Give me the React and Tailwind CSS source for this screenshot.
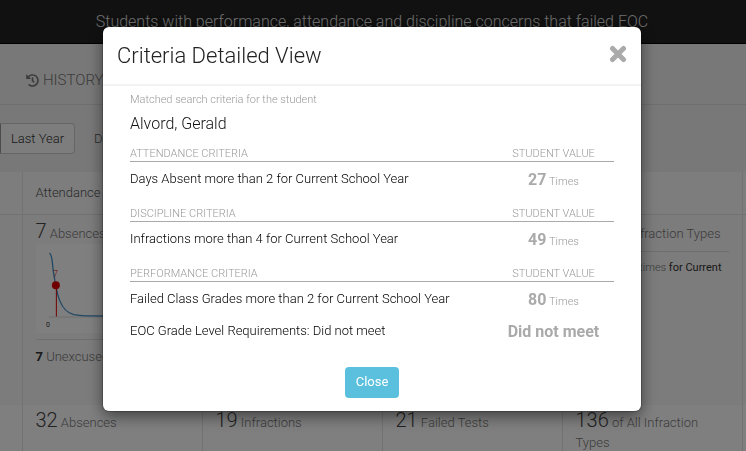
import { FaHistory } from "react-icons/fa";

const sections = [
  {
    title: "ATTENDANCE CRITERIA",
    rows: [{ label: "Days Absent more than 2 for Current School Year", value: "27", unit: "Times" }],
  },
  {
    title: "DISCIPLINE CRITERIA",
    rows: [{ label: "Infractions more than 4 for Current School Year", value: "49", unit: "Times" }],
  },
  {
    title: "PERFORMANCE CRITERIA",
    rows: [
      { label: "Failed Class Grades more than 2 for Current School Year", value: "80", unit: "Times" },
      { label: "EOC Grade Level Requirements: Did not meet", value: "Did not meet" },
    ],
  },
];

function CriteriaTable({ title, rows }) {
  return (
    <table className="w-full table-fixed border-collapse">
      <thead>
        <tr className="h-[15px] border-b border-[#aaa] text-[11px] leading-[13px] text-[#999]">
          <th scope="col" className="px-0 pt-px pb-0 text-left font-light">{title}</th>
          <th scope="col" className="w-[121px] px-0 pt-px pb-0 text-center font-light">STUDENT VALUE</th>
        </tr>
      </thead>
      <tbody>
        {rows.map((row) => (
          <tr key={row.label} className="h-8">
            <td className="px-0 pt-1 pb-0 text-[13px] leading-5 text-black">{row.label}</td>
            <td className="px-0 pt-2 pb-0 text-center text-[11px] leading-5 whitespace-nowrap text-[#999]">
              <strong className="text-base leading-5 font-bold text-[#aaa]">{row.value}</strong>
              {row.unit && <span> {row.unit}</span>}
            </td>
          </tr>
        ))}
      </tbody>
    </table>
  );
}

function Count({ number, children }) {
  return (
    <p className="text-[13px] leading-5 text-[#777]">
      <span className="text-[20px] text-[#444]">{number}</span> {children}
    </p>
  );
}

function AbsenceChart() {
  return (
    <svg viewBox="0 0 154 89" preserveAspectRatio="xMinYMin meet" className="h-[89px] w-full bg-[#ffffff]" role="img" aria-label="Absences distribution">
      <path d="M13 73.500H154" stroke="#ddd" />
      <path d="M13.500 9C17 11 16 21 18 31C21 50 24 68 38 71C50 73 60 72.500 154 72.500" fill="none" stroke="#3e8fc8" strokeWidth="1.300" />
      <path d="M20.500 41V73" stroke="#e00000" />
      <circle cx="20" cy="41.500" r="4" fill="#e00000" />
      <text x="17" y="33" fontSize="9" fill="#e00000">7</text>
      <text x="10" y="84" fontSize="7" className="font-normal" fill="#333">0</text>
    </svg>
  );
}

function Dashboard() {
  return (
    <div className="min-h-screen bg-[#f0f0f0]" aria-hidden="true">
      <header className="h-11 border-b border-black bg-[#222] pr-[2px] text-center text-base leading-[43px] text-[#ddd]">
        Students with performance, attendance and discipline concerns that failed EOC
      </header>
      <nav className="flex h-[61px] items-center border-b border-[#ddd] px-[26px] pt-[13px]">
        <a href="#history" className="flex items-center gap-1 text-[15px] text-[#777]">
          <FaHistory className="size-[13px]" />
          HISTORY
        </a>
      </nav>
      <div className="flex h-[67px] items-center">
        <button type="button" className="h-[31px] w-[75px] rounded-r border border-[#ccc] border-l-[#999] bg-[#fafafa] text-[13px] text-[#333]">
          Last Year
        </button>
        <button type="button" className="ml-[19px] text-[13px] text-[#555]">District</button>
      </div>
      <table className="w-full table-fixed border-collapse text-left text-[13px]">
        <colgroup>
          <col className="w-[22px]" />
          <col /><col /><col /><col />
          <col className="w-1" />
        </colgroup>
        <thead>
          <tr className="h-[42px] border-b border-[#e2e2e2] bg-[#fafafa] text-[#555]">
            <td />
            <th className="border-l border-[#e5e5e5] px-[13px] font-light">Attendance</th>
            <th className="border-l border-[#e5e5e5] px-[13px] font-light">Discipline</th>
            <th className="border-l border-[#e5e5e5] px-[13px] font-light">Performance</th>
            <th className="border-x border-[#e5e5e5] px-[13px] font-light">Infractions</th>
            <td />
          </tr>
        </thead>
        <tbody className="align-top">
          <tr className="h-[191px] bg-[#f8f8f8]">
            <td />
            <td className="border-l border-[#e5e5e5] px-[13px] pt-[6px]">
              <Count number="7">Absences</Count>
              <div className="border-b border-[#ddd] pb-[6px]"><AbsenceChart /></div>
              <p className="pt-[7px] leading-5 text-[#777]"><strong className="font-bold text-[#333]">7</strong> Unexcused</p>
            </td>
            <td className="border-l border-[#e5e5e5]" />
            <td className="border-l border-[#e5e5e5]" />
            <td className="border-x border-[#e5e5e5] px-[13px] pt-[9px]">
              <p className="border-b border-[#ddd] pr-2 pb-[7px] text-right leading-5 text-[#777]">80 Infraction Types</p>
              <p className="pt-[6px] pr-[7px] text-right text-[11px] leading-5 whitespace-nowrap text-[#777]">
                49 times <span className="font-normal text-[#333]">for Current</span>
              </p>
            </td>
            <td />
          </tr>
          <tr className="h-[60px] bg-[#ffffff]">
            <td />
            <td className="border-l border-[#e5e5e5] px-[13px] pt-[5px]"><Count number="32">Absences</Count></td>
            <td className="border-l border-[#e5e5e5] px-[13px] pt-[5px]"><Count number="19">Infractions</Count></td>
            <td className="border-l border-[#e5e5e5] px-[13px] pt-[5px]"><Count number="21">Failed Tests</Count></td>
            <td className="border-x border-[#e5e5e5] px-[13px] pt-[5px]"><Count number="136">of All Infraction Types</Count></td>
            <td />
          </tr>
        </tbody>
      </table>
    </div>
  );
}

function CriteriaDialog() {
  return (
    <div className="fixed inset-0 overflow-hidden bg-black/50 pt-[27px] pr-[105px] pl-[103px]">
      <section
        role="dialog"
        aria-modal="true"
        aria-labelledby="dialog-title"
        className="rounded-md bg-white shadow-[0_5px_15px_rgba(0,0,0,0.5),0_0_0_1px_rgba(0,0,0,0.2)]"
      >
        <header className="flex h-[59px] items-center justify-between border-b-2 border-[#f3f3f3] px-[14px]">
          <h1 id="dialog-title" className="text-[22px] text-[#222]">Criteria Detailed View</h1>
          <button type="button" aria-label="Close dialog" className="pb-1 text-[#aaa]">
            <svg viewBox="0 0 18 18" className="size-[18px]" fill="none" stroke="currentColor" strokeWidth="5" strokeLinecap="round">
              <path d="M3.500 3.500L14.500 14.500M14.500 3.500L3.500 14.500" />
            </svg>
          </button>
        </header>
        <div className="px-[27px] pt-[6px] pb-[13px]">
          <p className="text-[11px] leading-4 text-[#999]">Matched search criteria for the student</p>
          <h2 className="mt-[6px] mb-3 text-base leading-5 text-[#111]">Alvord, Gerald</h2>
          <div className="flex flex-col gap-[13px]">
            {sections.map((section) => (
              <CriteriaTable key={section.title} {...section} />
            ))}
          </div>
          <div className="mt-[22px] flex justify-center">
            <button type="button" className="h-[31px] rounded bg-[#5bc0de] px-[11px] pb-[2px] text-[13px] font-normal text-white">
              Close
            </button>
          </div>
        </div>
      </section>
    </div>
  );
}

export default function App() {
  return (
    <div className="h-screen overflow-hidden font-['Roboto','Liberation_Sans',sans-serif] font-light">
      <Dashboard />
      <CriteriaDialog />
    </div>
  );
}
